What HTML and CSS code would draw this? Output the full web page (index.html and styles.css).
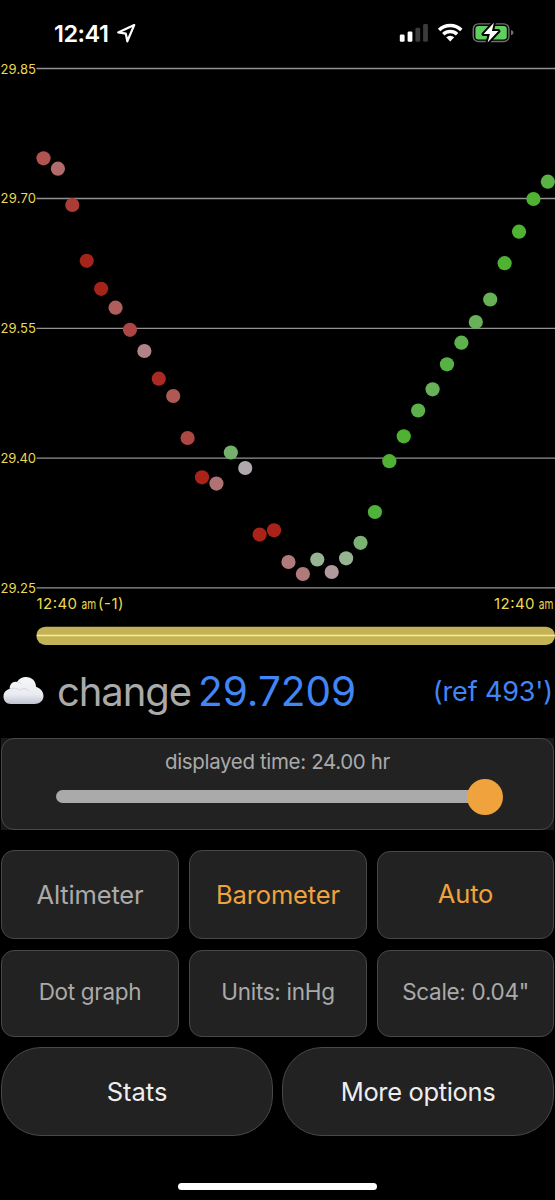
FILE: index.html
```html
<!DOCTYPE html>
<html lang="en">
<head>
  <meta charset="UTF-8">
  <meta name="viewport" content="width=device-width,initial-scale=1.0">
  <title>Barometer</title>
  <link rel="stylesheet" href="styles.css">
</head>
<body>
  <header class="status">
    <span class="clock">12:41</span>
    <svg class="arrow" width="20" height="20" viewBox="0 0 20 20">
      <path d="M18.2 2.1 L2.2 9.400 L9.800 10.600 L11.300 18.300 Z"/>
    </svg>
    <svg class="icons" width="116" height="24" viewBox="399 21 116 24">
      <g fill="#fff">
        <rect x="399.8" y="34.4" width="4.8" height="7.4" rx="1.4"/>
        <rect x="407.6" y="31.4" width="4.8" height="10.4" rx="1.4"/>
        <rect x="415.4" y="27.8" width="4.8" height="14" rx="1.4" fill="#3b3b3d"/>
        <rect x="423.1" y="24" width="4.8" height="17.8" rx="1.4" fill="#3b3b3d"/>
      </g>
      <!-- wifi -->
      <g fill="none" stroke="#fff" stroke-width="3.5">
        <path d="M439.1 30.1 A16 16 0 0 1 461.3 30.1"/>
        <path d="M443.3 34.3 A10 10 0 0 1 457.1 34.3"/>
      </g>
      <path d="M446.2 37.3 A5.9 5.9 0 0 1 454.2 37.3 L450.2 41.5 Z" fill="#fff"/>
      <!-- battery -->
      <rect x="473.3" y="23.9" width="35.6" height="17.6" rx="5" fill="none" stroke="#6f6f70" stroke-width="1.4"/>
      <path d="M511 30.1 C514.3 31 514.3 34.4 511 35.3 Z" fill="#6f6f70"/>
      <rect x="475.4" y="26" width="31.4" height="13.4" rx="3" fill="#5fcf60"/>
      <path d="M493.9 22.8 L483.6 34.1 H489.9 L487.6 42.4 L498.4 31.1 H491.9 Z" fill="#fff" stroke="#000" stroke-width="4" paint-order="stroke" stroke-linejoin="round"/>
    </svg>
  </header>

  <svg class="chart" width="555" height="590" viewBox="0 60 555 590">
    <g class="grid">
      <path d="M36.5 68.5H555"/>
      <path d="M36.5 198.5H555"/>
      <path d="M36.5 328.3H555"/>
      <path d="M36.5 458.2H555"/>
      <path d="M36.5 587.8H555"/>
    </g>
    <g class="axis">
      <text x="0.5" y="73.6" textLength="35.5">29.85</text>
      <text x="0.5" y="203.4" textLength="35.5">29.70</text>
      <text x="0.5" y="333.3" textLength="35.5">29.55</text>
      <text x="0.5" y="463.1" textLength="35.5">29.40</text>
      <text x="0.5" y="592.9" textLength="35.5">29.25</text>
    </g>
    <g class="time">
      <text x="36.5" y="609" textLength="40.5">12:40</text>
      <text class="am" transform="translate(81.5 609) scale(.7 1)">am</text>
      <text x="98" y="609" textLength="25.5">(-1)</text>
      <text x="494" y="609" textLength="40.5">12:40</text>
      <text class="am" transform="translate(538.7 609) scale(.7 1)">am</text>
    </g>
    <g id="dots"></g>
    <rect x="36.3" y="626.7" width="518.7" height="18.2" rx="9.1" fill="#c4b356"/>
    <path d="M37 635.5H555" stroke="#f7ed9c" stroke-width="1.3"/>
  </svg>

  <section class="reading">
    <svg class="cloud" width="42" height="30" viewBox="0 0 42 30">
      <defs>
        <linearGradient id="sky" x1="0" y1="0" x2="0" y2="1">
          <stop offset="0" stop-color="#f6f8fa"/>
          <stop offset="0.65" stop-color="#e9ebf0"/>
          <stop offset="1" stop-color="#bfc3cf"/>
        </linearGradient>
      </defs>
      <path d="M9 28 C4 28 1.500 24.500 1.500 20.500 C1.500 16.500 4 13.600 7.700 12.900 C7.500 8.500 10.500 5 15 6 C17 2.800 20.200 1 24 1 C30 1 34 5.300 34 10.700 C38.500 12.200 41.500 15.700 41.500 20 C41.500 24.800 37.500 28 32.500 28 Z" fill="url(#sky)"/>
      <path d="M8 13 C12 11.500 15.500 12.300 17.500 14.300 C20.500 11.300 26 12.600 27 15.500 M15 6 C17 6.200 18.600 7 19.500 8.300" fill="none" stroke="#d3d7df" stroke-width="1"/>
    </svg>
    <span class="trend">change</span>
    <span class="value">29.7209</span>
    <span class="ref">(ref 493')</span>
  </section>

  <section class="panel">
    <div class="panel-inner">
      <div class="panel-label">displayed time: 24.00 hr</div>
      <div class="track"><div class="thumb"></div></div>
    </div>
  </section>

  <div class="row modes">
    <button class="btn">Altimeter</button>
    <button class="btn on">Barometer</button>
    <button class="btn on auto">Auto</button>
  </div>
  <div class="row settings">
    <button class="btn small">Dot graph</button>
    <button class="btn small">Units: inHg</button>
    <button class="btn small">Scale: 0.04"</button>
  </div>
  <div class="row links">
    <button class="btn pill">Stats</button>
    <button class="btn pill more">More options</button>
  </div>
  <div class="home"></div>

  <script src="chart.js"></script>
</body>
</html>
```

FILE: styles.css
```css
* {
  box-sizing: border-box;
}
body {
  margin: 0;
  width: 555px;
  height: 1200px;
  overflow: hidden;
  background: #000;
  color: #aaa;
  font-family: Inter, "Liberation Sans", sans-serif;
}
svg {
  display: block;
  flex: none;
}
.status {
  display: flex;
  align-items: center;
  height: 60px;
  padding: 6px 40px 0 54px;
}
.clock {
  width: 62px;
  color: #fff;
  font-size: 23.5px;
  font-weight: 600;
  letter-spacing: -0.5px;
}
.arrow {
  fill: none;
  stroke: #fff;
  stroke-width: 2.2;
  stroke-linejoin: round;
}
.icons {
  margin-left: auto;
}
.grid {
  stroke: #929292;
  stroke-width: 1.3;
}
.axis, .time {
  fill: #ecd94f;
  font-size: 13px;
}
.time {
  font-size: 15px;
}
.am {
  font-size: 14.5px;
}
.reading {
  display: flex;
  align-items: center;
  height: 88px;
  padding: 0 2px 6px 2px;
  white-space: nowrap;
}
.trend {
  width: 142px;
  padding-left: 13px;
  font-size: 40px;
  letter-spacing: -1.1px;
}
.value {
  color: #4285f4;
  font-size: 40.5px;
  padding-left: 12px;
}
.ref {
  margin-left: auto;
  color: #4285f4;
  font-size: 27px;
  letter-spacing: -0.15px;
}
.panel {
  width: 553px;
  height: 92px;
  margin: 0 1px 20px;
  background: #191919;
}
.panel-inner {
  height: 92px;
  padding: 10px 54px 0;
  background: #222;
  border: 1px solid #484848;
  border-radius: 13px;
}
.panel-label {
  height: 41px;
  line-height: 25px;
  font-size: 20.5px;
  letter-spacing: -0.35px;
  text-align: center;
  white-space: nowrap;
}
.track {
  display: flex;
  align-items: center;
  justify-content: flex-end;
  width: 447px;
  height: 13px;
  border-radius: 7px;
  background: linear-gradient(#aaa, #aaa) left / 430px 100% no-repeat;
}
.thumb {
  flex: none;
  width: 36px;
  height: 36px;
  border-radius: 50%;
  background: #f0a33c;
}
.row {
  display: grid;
  grid-template-columns: 178px 178px 177px;
  gap: 10px;
  padding-left: 1px;
}
.btn {
  height: 89px;
  padding: 0;
  border: 1px solid #484848;
  border-radius: 13px;
  background: #222;
  color: #aaa;
  font-family: inherit;
  font-size: 25.5px;
  letter-spacing: -0.15px;
  white-space: nowrap;
}
.on {
  color: #f0a33c;
}
.auto {
  height: 88px;
  margin-top: 1px;
  padding-bottom: 4px;
}
.settings {
  margin: 11px 0 10px;
}
.small {
  height: 87px;
  font-size: 22.5px;
  letter-spacing: -0.3px;
  padding-bottom: 4px;
}
.links {
  grid-template-columns: 272px 272px;
  gap: 9px;
}
.pill {
  border-radius: 40px;
  color: #eee;
  letter-spacing: 0;
}
.more {
  letter-spacing: -0.35px;
}
.home {
  width: 199px;
  height: 7px;
  margin: 47px auto 0;
  border-radius: 4px;
  background: #fff;
}
```

FILE: chart.js
```js
// y position and colour of each reading, oldest first
var readings = [
  [158.3, "#b05351"], [168.7, "#b26b6b"], [205, "#ac3c38"], [260.8, "#a52419"],
  [288.8, "#a52419"], [307.7, "#b05d5c"], [329.8, "#ab4644"], [351, "#b28386"],
  [378.7, "#aa2a23"], [396, "#ae5956"], [438, "#ac4744"], [477.3, "#a92319"],
  [483.6, "#b07374"], [452.5, "#74b26b"], [468, "#b0a8ac"], [534.6, "#a92319"],
  [530.3, "#a92319"], [562, "#b07a7b"], [574, "#b07a7b"], [559.5, "#96b491"],
  [572, "#b19a9b"], [558.3, "#96b491"], [542.8, "#7bb171"], [512, "#4fb23a"],
  [461.2, "#4fb232"], [436.3, "#4fb232"], [410.5, "#5cb14a"], [389.3, "#69b05b"],
  [364.3, "#58b145"], [342.7, "#5eb14d"], [322, "#68b15a"], [299.5, "#65b154"],
  [263.2, "#50b233"], [231.7, "#50b233"], [199, "#50b233"], [181.7, "#5ab244"]
];

var dots = document.getElementById("dots");
readings.forEach(function(reading, i) {
  var dot = document.createElementNS("http://www.w3.org/2000/svg", "circle");
  dot.setAttribute("cx", 43.5 + i * 14.41);
  dot.setAttribute("cy", reading[0]);
  dot.setAttribute("r", 7.1);
  dot.setAttribute("fill", reading[1]);
  dots.appendChild(dot);
});
```
